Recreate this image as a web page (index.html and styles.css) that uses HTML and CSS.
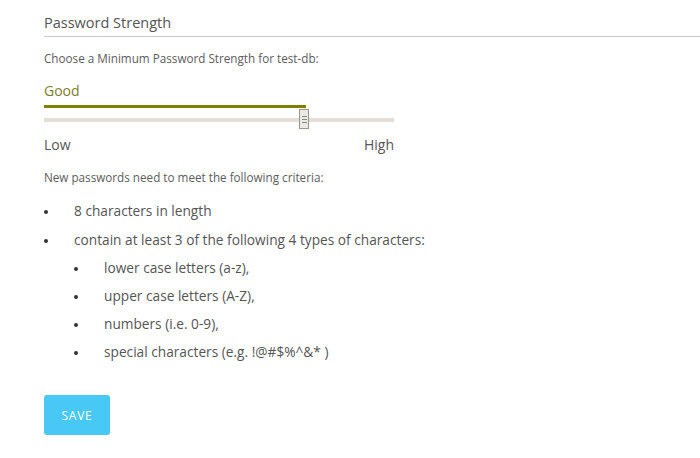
FILE: index.html
```html
<!DOCTYPE html>
<html>
<head>
<meta charset="utf-8">
<link rel="stylesheet" href="styles.css">
</head>
<body>
<div class="page">
  <h2 class="title">Password Strength</h2>
  <p class="small">Choose a Minimum Password Strength for test-db:</p>
  <div class="strength">
    <div class="level">Good</div>
    <div class="level-bar"></div>
    <div class="track">
      <div class="thumb"><span></span><span></span><span></span></div>
    </div>
    <div class="ends"><span>Low</span><span>High</span></div>
  </div>
  <p class="small criteria">New passwords need to meet the following criteria:</p>
  <ul class="list">
    <li>8 characters in length</li>
    <li>contain at least 3 of the following 4 types of characters:
      <ul class="list sub">
        <li>lower case letters (a-z),</li>
        <li>upper case letters (A-Z),</li>
        <li>numbers (i.e. 0-9),</li>
        <li>special characters (e.g. !@#$%^&amp;* )</li>
      </ul>
    </li>
  </ul>
  <button class="save">SAVE</button>
</div>
</body>
</html>
```
FILE: styles.css
```css
html, body { margin: 0; padding: 0; background: #fff; }
body { font-family: "Open Sans", "Lato", sans-serif; color: #555555; }
.page { padding: 11px 0 0 44px; }
.title {
  margin: 0;
  font-size: 14.5px;
  font-weight: 400;
  line-height: 24px;
  padding-bottom: 1px;
  border-bottom: 1px solid #cccccc;
}
.small { margin: 0; font-size: 11.7px; line-height: 16px; color: #5c5c5c; }
.title + .small { margin-top: 13px; }
.strength { width: 350px; margin-top: 15px; }
.level { color: #7d7d2a; font-size: 14px; line-height: 20px; }
.level-bar { width: 262px; height: 3px; background: #7f8000; margin-top: 4px; }
.track { position: relative; height: 4px; background: #e2dfd9; margin-top: 10px; }
.thumb {
  position: absolute; left: 255px; top: -9px;
  width: 8px; height: 18px;
  background: #edeae6; border: 1px solid #9a968f;
  display: flex; flex-direction: column; justify-content: center; align-items: center; gap: 2px;
}
.thumb span { display: block; width: 5px; height: 1px; background: #8a8680; }
.ends { display: flex; justify-content: space-between; font-size: 14px; line-height: 20px; margin-top: 13px; }
.criteria { margin-top: 14px; }
.list { list-style: none; margin: 0; padding: 0; font-size: 13.7px; }
.list > li { position: relative; padding-left: 30px; line-height: 20px; margin-top: 9px; }
.list > li::before {
  content: ""; position: absolute; left: 0; top: 9px;
  width: 4px; height: 4px; border-radius: 50%; background: #333;
}
.criteria + .list { margin-top: 16px; }
.sub { margin-top: 0; }
.sub > li { margin-top: 8px; }
.save {
  margin-top: 33px;
  width: 66px; height: 40px;
  background: #48c8f5; color: #fff; border: none; border-radius: 3px;
  font-family: "Open Sans", sans-serif; font-size: 12px; letter-spacing: 0.7px;
}
```
